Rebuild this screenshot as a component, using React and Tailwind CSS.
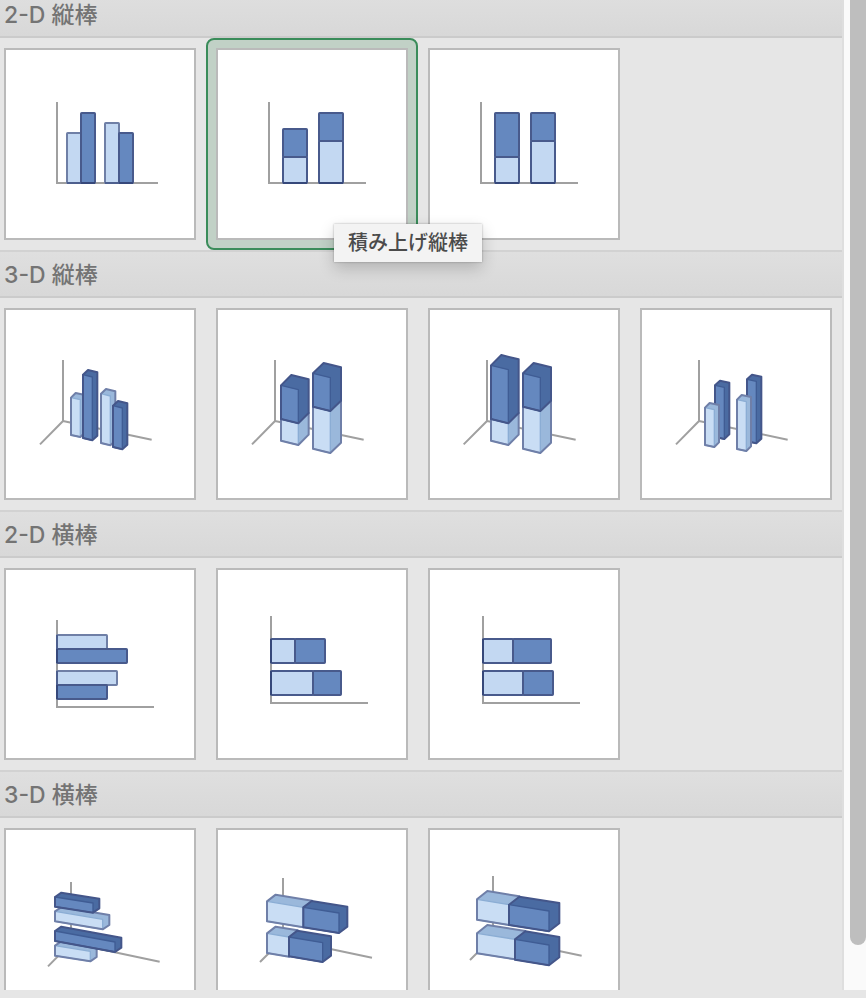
const LIGHT = { flat: '#c3d8f2', front: '#c9ddf4', shade: '#9ab8db', edge: '#8badd4', line: '#6f7fa8' };
const DARK = { flat: '#6588bf', front: '#6588bf', shade: '#4a6ba2', edge: '#3f5c94', line: '#44568a' };

// Flat chart: axes in grey, then the bars as [x, y, width, height, colour, soft outline].
// The side of each bar that stands on the axis is drawn darker.
function FlatIcon({ axes, bars, horizontal, axis }) {
  return (
    <svg viewBox="2 2 188 188" className="block h-full w-full" aria-hidden="true">
      <path d={axes} fill="none" stroke="#a0a0a0" strokeWidth="2" />
      {bars.map(([x, y, w, h, tone, soft], i) => {
        const touches = horizontal ? x === axis : y + h === axis;
        return (
          <g key={i}>
            <rect
              x={x}
              y={y}
              width={w}
              height={h}
              rx="0.7"
              fill={tone.flat}
              stroke={soft ? '#6f7fa6' : '#485a8c'}
              strokeWidth="2"
              strokeLinejoin="round"
            />
            {touches && (
              <path
                d={horizontal ? `M${x} ${y}v${h}` : `M${x} ${y + h}h${w}`}
                stroke={soft ? '#4d5f8e' : '#36487a'}
                strokeWidth="2"
              />
            )}
          </g>
        );
      })}
    </svg>
  );
}

// A box seen at an angle. (x, y) is the top left corner of its front face, drop is how far
// the face falls over its width, and (ex, ey) is the shift to the back face.
function Prism({ x, y, w, drop, h, ex, ey, tone }) {
  const silhouette = [
    [x, y],
    [x + ex, y - ey],
    [x + w + ex, y + drop - ey],
    [x + w + ex, y + drop - ey + h],
    [x + w, y + drop + h],
    [x, y + h],
  ].join(' ');
  const front = [
    [x, y],
    [x + w, y + drop],
    [x + w, y + drop + h],
    [x, y + h],
  ].join(' ');
  return (
    <g strokeLinejoin="round">
      <polygon points={silhouette} fill={tone.shade} />
      <polygon points={front} fill={tone.front} stroke={tone.edge} strokeWidth="4" />
      <polygon points={silhouette} fill="none" stroke={tone.line} strokeWidth="6" />
    </g>
  );
}

// Angled chart, drawn on a grid three times as fine as the tile.
function DeepIcon({ viewBox, axes, prisms }) {
  return (
    <svg viewBox={viewBox} className="block h-full w-full" aria-hidden="true">
      <path d={axes} fill="none" stroke="#a0a0a0" strokeWidth="6" />
      {prisms.map(([x, y, w, drop, h, ex, ey, tone], i) => (
        <Prism key={i} x={x} y={y} w={w} drop={drop} h={h} ex={ex} ey={ey} tone={tone} />
      ))}
    </svg>
  );
}

const SECTIONS = [
  {
    title: '2-D 縦棒',
    tiles: [
      {
        name: '集合縦棒',
        icon: (
          <FlatIcon
            axes="M53 54V135H154"
            axis={135}
            bars={[
              [63, 85, 14, 50, LIGHT, true],
              [77, 65, 14, 70, DARK],
              [101, 75, 14, 60, LIGHT, true],
              [115, 85, 14, 50, DARK],
            ]}
          />
        ),
      },
      {
        name: '積み上げ縦棒',
        selected: true,
        icon: (
          <FlatIcon
            axes="M53 54V135H150"
            axis={135}
            bars={[
              [67, 109, 24, 26, LIGHT],
              [67, 81, 24, 28, DARK],
              [103, 93, 24, 42, LIGHT],
              [103, 65, 24, 28, DARK],
            ]}
          />
        ),
      },
      {
        name: '100% 積み上げ縦棒',
        icon: (
          <FlatIcon
            axes="M53 54V135H150"
            axis={135}
            bars={[
              [67, 109, 24, 26, LIGHT],
              [67, 65, 24, 44, DARK],
              [103, 93, 24, 42, LIGHT],
              [103, 65, 24, 28, DARK],
            ]}
          />
        ),
      },
    ],
  },
  {
    title: '3-D 縦棒',
    tiles: [
      {
        name: '3-D 集合縦棒',
        icon: (
          <DeepIcon
            viewBox="-72 -90 564 564"
            axes="M99 60V243L30 313M99 243L365 299"
            prisms={[
              [123, 173, 28, 6, 112, 14, 14, LIGHT],
              [159, 104, 28, 7, 190, 15, 14, DARK],
              [213, 161, 28, 7, 148, 15, 14, LIGHT],
              [249, 197, 28, 7, 124, 15, 14, DARK],
            ]}
          />
        ),
      },
      {
        name: '3-D 積み上げ縦棒',
        icon: (
          <DeepIcon
            viewBox="-66 -90 564 564"
            axes="M105 60V243L36 313M105 243L371 299"
            prisms={[
              [123, 237, 52, 13, 65, 31, 31, LIGHT],
              [123, 136, 52, 13, 101, 31, 31, DARK],
              [219, 200, 52, 13, 126, 32, 31, LIGHT],
              [219, 100, 52, 13, 100, 32, 31, DARK],
            ]}
          />
        ),
      },
      {
        name: '3-D 100% 積み上げ縦棒',
        icon: (
          <DeepIcon
            viewBox="-60 -90 564 564"
            axes="M111 60V243L41 313M111 243L377 299"
            prisms={[
              [123, 237, 52, 13, 65, 31, 31, LIGHT],
              [123, 76, 52, 13, 161, 31, 31, DARK],
              [219, 200, 52, 13, 126, 32, 31, LIGHT],
              [219, 100, 52, 13, 100, 32, 31, DARK],
            ]}
          />
        ),
      },
      {
        name: '3-D 縦棒',
        icon: (
          <DeepIcon
            viewBox="-54 -90 564 564"
            axes="M117 60V243L48 313M117 243L383 299"
            prisms={[
              [165, 136, 28, 6, 155, 15, 14, DARK],
              [135, 203, 28, 6, 112, 14, 14, LIGHT],
              [261, 118, 28, 6, 186, 15, 14, DARK],
              [231, 179, 28, 6, 148, 14, 14, LIGHT],
            ]}
          />
        ),
      },
    ],
  },
  {
    title: '2-D 横棒',
    tiles: [
      {
        name: '集合横棒',
        icon: (
          <FlatIcon
            axes="M53 52V139H150"
            axis={53}
            horizontal
            bars={[
              [53, 67, 50, 14, LIGHT, true],
              [53, 81, 70, 14, DARK],
              [53, 103, 60, 14, LIGHT, true],
              [53, 117, 50, 14, DARK],
            ]}
          />
        ),
      },
      {
        name: '積み上げ横棒',
        icon: (
          <FlatIcon
            axes="M55 48V135H152"
            axis={55}
            horizontal
            bars={[
              [55, 71, 24, 24, LIGHT],
              [79, 71, 30, 24, DARK],
              [55, 103, 42, 24, LIGHT],
              [97, 103, 28, 24, DARK],
            ]}
          />
        ),
      },
      {
        name: '100% 積み上げ横棒',
        icon: (
          <FlatIcon
            axes="M55 48V135H152"
            axis={55}
            horizontal
            bars={[
              [55, 71, 30, 24, LIGHT],
              [85, 71, 38, 24, DARK],
              [55, 103, 40, 24, LIGHT],
              [95, 103, 30, 24, DARK],
            ]}
          />
        ),
      },
    ],
  },
  {
    title: '3-D 横棒',
    tiles: [
      {
        name: '3-D 集合横棒',
        icon: (
          <DeepIcon
            viewBox="18 210 564 564"
            axes="M213 366V549L144 619M213 549L479 605"
            prisms={[
              [165, 557, 106, 17, 30, 19, 13, LIGHT],
              [165, 513, 180, 33, 30, 19, 13, DARK],
              [165, 454, 143, 24, 30, 20, 13, LIGHT],
              [165, 411, 114, 18, 29, 19, 13, DARK],
            ]}
          />
        ),
      },
      {
        name: '3-D 積み上げ横棒',
        icon: (
          <DeepIcon
            viewBox="-66 -90 564 564"
            axes="M129 54V237L60 306M129 237L396 293"
            prisms={[
              [81, 220, 66, 11, 59, 26, 20, LIGHT],
              [147, 231, 101, 17, 58, 25, 19, DARK],
              [81, 124, 109, 18, 60, 26, 20, LIGHT],
              [190, 142, 107, 17, 60, 25, 19, DARK],
            ]}
          />
        ),
      },
      {
        name: '3-D 100% 積み上げ横棒',
        icon: (
          <DeepIcon
            viewBox="570 -90 564 564"
            axes="M759 48V231L690 300M759 231L1025 287"
            prisms={[
              [711, 220, 114, 18, 60, 31, 25, LIGHT],
              [825, 238, 102, 17, 61, 31, 24, DARK],
              [711, 118, 96, 16, 61, 31, 25, LIGHT],
              [807, 134, 120, 19, 61, 31, 24, DARK],
            ]}
          />
        ),
      },
    ],
  },
];

function Tile({ name, selected, icon }) {
  return (
    <div className="relative">
      <button
        type="button"
        aria-label={name}
        aria-pressed={!!selected}
        className={
          selected
            ? 'block size-[212px] rounded-lg border-2 border-[#3a8c5a] bg-[#c1d1c6] p-2'
            : 'block size-[212px] rounded-lg border-2 border-transparent p-2'
        }
      >
        <span className="block h-full w-full border-2 border-[#bababa] bg-white">{icon}</span>
      </button>
      {selected && (
        <div
          role="tooltip"
          className="absolute top-[186px] left-32 z-10 bg-[#f3f3f3] px-3.5 py-1 text-xl leading-[30px] font-medium whitespace-nowrap text-[#4b4b4b] shadow-[0_0_2px_rgba(0,0,0,0.3),0_6px_16px_rgba(0,0,0,0.2)]"
        >
          {name}
        </div>
      )}
    </div>
  );
}

export default function App() {
  return (
    <main className="h-screen overflow-hidden bg-[#e6e6e6] pb-2 font-[Inter,'Noto_Sans_CJK_JP',sans-serif]">
      <div className="flex h-full overflow-hidden">
        <div className="-mt-2.5 min-w-0 flex-1">
          {SECTIONS.map((section) => (
            <section key={section.title}>
              <h2 className="h-12 border-y-2 border-t-[#d2d2d2] border-b-[#cbcbcb] bg-linear-to-b from-[#dfdfdf] to-[#d8d8d8] px-1 text-[23px] leading-[46px] font-medium text-[#747474]">
                {section.title}
              </h2>
              <div className="-ml-1.5 flex flex-wrap">
                {section.tiles.map((tile) => (
                  <Tile key={tile.name} {...tile} />
                ))}
              </div>
            </section>
          ))}
        </div>
        <div className="w-6 shrink-0 border-l-2 border-[#dedede] bg-[#fafafa] pl-1.5">
          <div className="-mt-2.5 h-[96.5%] rounded-full bg-[#bebebe]" />
        </div>
      </div>
    </main>
  );
}
